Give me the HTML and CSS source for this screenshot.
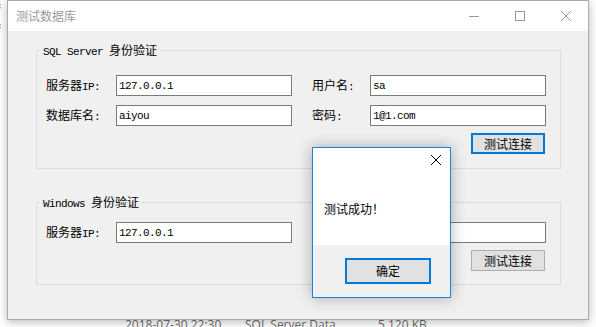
FILE: index.html
```html
<!DOCTYPE html>
<html lang="zh-CN">
<head>
<meta charset="utf-8">
<title>测试数据库</title>
<link rel="stylesheet" href="styles.css">
</head>
<body>
<div class="desk">
  <div class="peek">f</div>
  <div class="peek">f</div>
  <div class="filerow"><span class="c1">2018-07-30 22:30</span><span class="c2">SQL Server Data...</span><span class="c3">5,120 KB</span></div>
</div>

<div class="win main">
  <div class="titlebar">
    <div class="title">测试数据库</div>
    <div class="caps">
      <div class="cap"><svg width="10" height="10" viewBox="0 0 10 10"><path d="M0 5.5H10" stroke="#999" stroke-width="1"/></svg></div>
      <div class="cap"><svg width="10" height="10" viewBox="0 0 10 10"><rect x="0.5" y="0.5" width="9" height="9" fill="none" stroke="#999" stroke-width="1"/></svg></div>
      <div class="cap"><svg width="10" height="10" viewBox="0 0 10 10"><path d="M0 0L10 10M10 0L0 10" stroke="#999" stroke-width="1"/></svg></div>
    </div>
  </div>
  <div class="client">
    <div class="group g1">
      <div class="legend"><span class="lat">SQL Server </span>身份验证</div>
      <div class="form">
        <label class="lbl">服务器<span class="lat">IP:</span></label>
        <input class="tb" type="text" value="127.0.0.1">
        <label class="lbl r">用户名<span class="lat">:</span></label>
        <input class="tb" type="text" value="sa">
        <label class="lbl">数据库名<span class="lat">:</span></label>
        <input class="tb" type="text" value="aiyou">
        <label class="lbl r">密码<span class="lat">:</span></label>
        <input class="tb" type="text" value="1@1.com">
        <button class="btn focus">测试连接</button>
      </div>
    </div>
    <div class="group g2">
      <div class="legend"><span class="lat">Windows </span>身份验证</div>
      <div class="form">
        <label class="lbl">服务器<span class="lat">IP:</span></label>
        <input class="tb" type="text" value="127.0.0.1">
        <label class="lbl r"></label>
        <input class="tb" type="text" value="">
        <button class="btn">测试连接</button>
      </div>
    </div>
  </div>
</div>

<div class="win dlg">
  <div class="dlg-body">
    <svg class="dlg-close" width="10" height="10" viewBox="0 0 10 10"><path d="M0 0L10 10M10 0L0 10" stroke="#000" stroke-width="1"/></svg>
    <div class="msg">测试成功！</div>
  </div>
  <div class="dlg-foot">
    <button class="btn focus ok">确定</button>
  </div>
</div>
</body>
</html>
```

FILE: styles.css
```css
* { box-sizing: border-box; }
html, body { margin: 0; padding: 0; }
body {
  width: 596px;
  height: 327px;
  overflow: hidden;
  position: relative;
  background: #fff;
  font-family: "Noto Sans CJK SC", "Noto Sans", sans-serif;
  font-size: 12px;
  color: #000;
}

/* desktop content behind the windows */
.desk { height: 327px; }
.peek {
  font-family: "Liberation Sans", sans-serif;
  font-weight: bold;
  color: #d4830f;
  font-size: 14px;
  line-height: 20px;
  height: 20px;
  margin-left: -4px;
}
.filerow {
  margin-top: 279px;
  display: flex;
  font-family: "Open Sans", "Noto Sans", sans-serif;
  font-size: 12px;
  line-height: 12px;
  color: #6d6d6d;
  white-space: nowrap;
}
.c1 { margin-left: 125px; width: 120px; }
.c2 { width: 133px; }

/* windows */
.win { position: absolute; }
.main {
  left: 7px;
  top: 0;
  width: 582px;
  height: 320px;
  border: 1px solid #aaa;
  background: #f0f0f0;
  box-shadow: 0 2px 9px rgba(0, 0, 0, 0.28);
}
.titlebar {
  height: 30px;
  background: #fff;
  display: flex;
  align-items: center;
}
.title {
  flex: 1;
  padding-left: 8px;
  color: #9a9a9a;
  line-height: 16px;
}
.caps { display: flex; align-self: stretch; }
.cap {
  width: 46px;
  display: flex;
  align-items: center;
  padding-left: 19px;
}
.cap svg { display: block; }

.client { padding: 19px 0 0 28px; }
.group {
  width: 525px;
  border: 1px solid #dcdcdc;
  padding-left: 9px;
}
.g1 { height: 119px; }
.g2 { height: 83px; margin-top: 33px; }
.legend {
  width: fit-content;
  height: 16px;
  margin: -9px 0 0 -6px;
  padding: 0 3px;
  background: #f0f0f0;
  line-height: 16px;
  white-space: nowrap;
}
.form {
  display: grid;
  grid-template-columns: 70px 176px 78px 176px;
  grid-template-rows: 21px 21px;
  row-gap: 9px;
}
.g1 .form { margin-top: 17px; }
.g2 .form { margin-top: 12px; }
.lbl {
  height: 21px;
  line-height: 20px;
  white-space: nowrap;
}
.lbl.r { padding-left: 20px; }
.lat {
  font-family: "Liberation Mono", monospace;
  font-size: 11px;
  line-height: 12px;
  letter-spacing: -0.6px;
}
.tb {
  width: 176px;
  height: 21px;
  margin: 0;
  border: 1px solid #7a7a7a;
  padding: 0 2px;
  background: #fff;
  color: #000;
  font-family: "Liberation Mono", monospace;
  font-size: 11px;
  letter-spacing: -0.6px;
  outline: none;
}
.btn {
  grid-column: 4;
  justify-self: end;
  width: 74px;
  height: 21px;
  margin: -2px 1px 0 0;
  padding: 0;
  border: 1px solid #adadad;
  background: #e1e1e1;
  color: #000;
  font-family: "Noto Sans CJK SC", sans-serif;
  font-size: 12px;
  line-height: 16px;
}
.btn.focus { border: 2px solid #0078d7; }

/* message box */
.dlg {
  left: 312px;
  top: 147px;
  width: 139px;
  height: 151px;
  border: 1px solid #1a83d8;
  background: #f0f0f0;
  box-shadow: 0 0 14px rgba(0, 0, 0, 0.3);
  display: flex;
  flex-direction: column;
}
.dlg-body {
  height: 97px;
  background: #fff;
  padding-left: 11px;
  display: flex;
  flex-direction: column;
}
.dlg-close {
  display: block;
  align-self: flex-end;
  margin: 7px 9px 0 0;
}
.msg {
  margin-top: 36px;
  line-height: 16px;
  white-space: nowrap;
}
.dlg-foot {
  flex: 1;
  display: flex;
  justify-content: flex-end;
  align-items: flex-start;
  padding: 13px 19px 0 0;
}
.ok {
  width: 86px;
  height: 26px;
  margin: 0;
}
```
